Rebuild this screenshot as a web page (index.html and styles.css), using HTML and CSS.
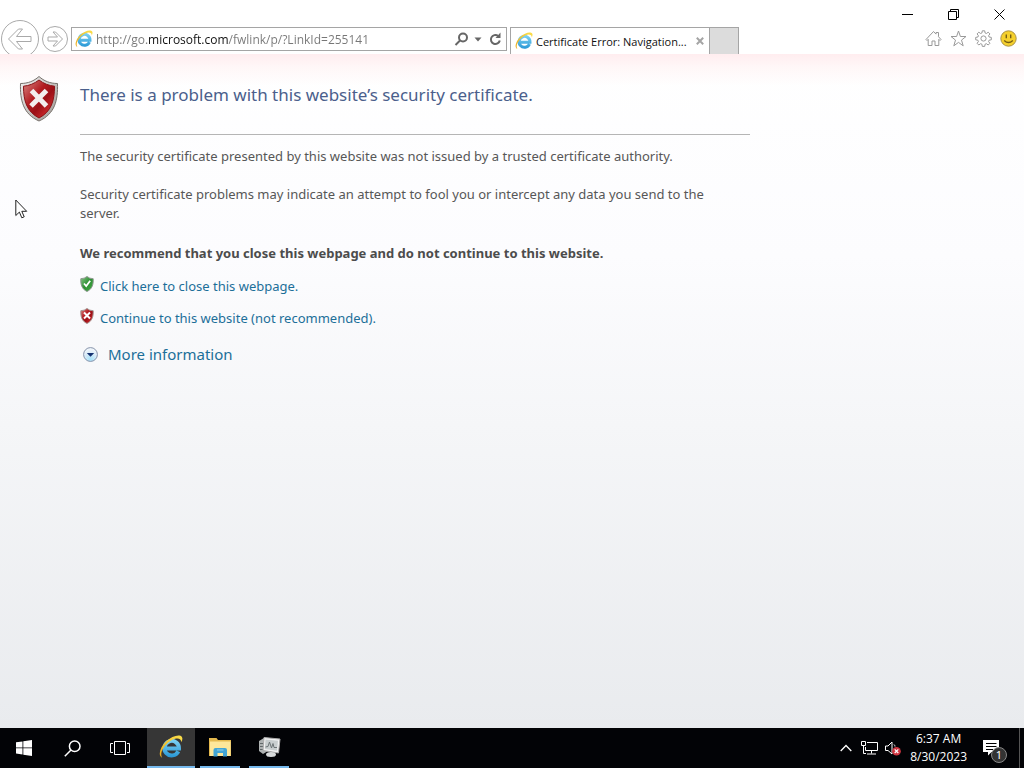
FILE: index.html
```html
<!DOCTYPE html>
<html lang="en">
<head>
<meta charset="utf-8">
<meta name="viewport" content="width=device-width, initial-scale=1">
<title>Certificate Error: Navigation Blocked</title>
<link rel="stylesheet" href="styles.css">
</head>
<body>
<svg class="defs" aria-hidden="true">
  <defs>
    <linearGradient id="ieBlue" gradientUnits="userSpaceOnUse" x1="0" y1="3" x2="0" y2="22"><stop offset="0" stop-color="#86d8f6"/><stop offset="1" stop-color="#2a98d6"/></linearGradient>
    <linearGradient id="ieGold" x1="0" y1="1" x2="1" y2="0"><stop offset="0" stop-color="#e9a91c"/><stop offset="1" stop-color="#fbe04c"/></linearGradient>
    <linearGradient id="rim" x1="0" y1="0" x2="1" y2="1"><stop offset="0" stop-color="#f4f4f4"/><stop offset="1" stop-color="#9b9590"/></linearGradient>
    <linearGradient id="red" x1="0" y1="0" x2="1" y2="1"><stop offset="0" stop-color="#d98a86"/><stop offset=".4" stop-color="#b31c21"/><stop offset=".6" stop-color="#9c0f16"/><stop offset="1" stop-color="#ee3b3b"/></linearGradient>
    <linearGradient id="green" x1="0" y1="0" x2="1" y2="1"><stop offset="0" stop-color="#8bc58a"/><stop offset=".5" stop-color="#2d8f33"/><stop offset="1" stop-color="#45ad45"/></linearGradient>
    <radialGradient id="ball" cx=".5" cy=".85" r=".8"><stop offset="0" stop-color="#a5e2fa"/><stop offset=".6" stop-color="#dcecf8"/><stop offset="1" stop-color="#f4f8fc"/></radialGradient>
    <symbol id="ie" viewBox="0 0 24 24">
      <path d="M19.300 16.300A7.300 7.300 0 1 1 20 13.500H7.500" fill="none" stroke="url(#ieBlue)" stroke-width="4"/>
      <path d="M3.200 22.800C-1.500 20.500 1 12.500 7 6.500 13 .9 20.800-1 22.900 2 23.900 3.600 23.200 5.600 22.400 7.200 22.200 3.300 18.500 2.300 13.400 4.800 7.500 7.800 2.800 14 2.300 18.500 2.200 20.500 2.500 21.700 3.200 22.800Z" fill="url(#ieGold)"/>
    </symbol>
  </defs>
</svg>

<div class="desktop">
  <header class="chrome">
    <nav class="history" aria-label="History">
      <button class="round back" aria-label="Back">
        <svg width="38" height="38" viewBox="0 0 38 38"><circle cx="19" cy="19" r="18.500"/><path d="M7.500 19 17.500 9h4L15.500 16.500H30v5H15.500L21.500 29h-4Z"/></svg>
      </button>
      <button class="round forward" aria-label="Forward">
        <svg width="26" height="26" viewBox="0 0 26 26"><circle cx="13" cy="13" r="12.500"/><path d="M20.500 13 13.500 6H11l4.500 5H6v4h9.500L11 20h2.500Z"/></svg>
      </button>
    </nav>
    <form class="address">
      <svg width="18" height="18"><use href="#ie"/></svg>
      <input class="url" type="text" aria-label="Address" value="http://go.microsoft.com/fwlink/p/?LinkId=255141">
      <button class="field-button" type="button" aria-label="Search"><svg width="15" height="15" viewBox="0 0 15 15" fill="none" stroke="#666" stroke-width="2"><circle cx="9" cy="5.500" r="4"/><path d="M6 8.500 1.500 13"/></svg></button>
      <button class="field-button" type="button" aria-label="Show address list"><svg width="8" height="5" viewBox="0 0 8 5"><path d="M.5.5h7L4 4.500Z" fill="#666"/></svg></button>
      <button class="field-button refresh" type="button" aria-label="Refresh"><svg width="13" height="14" viewBox="0 0 13 14"><path d="M10.800 8.500A4.500 4.500 0 1 1 9 3.800" fill="none" stroke="#666" stroke-width="2"/><path d="M11.500.5V6H6.500Z" fill="#666"/></svg></button>
    </form>
    <div class="tabs">
      <div class="tab">
        <svg width="18" height="18"><use href="#ie"/></svg>
        <span class="tab-title">Certificate Error: Navigation...</span>
        <button class="tab-close" aria-label="Close tab"><svg width="8" height="8" viewBox="0 0 8 8"><path d="m.8.8 6.400 6.400M7.200.8.8 7.200" stroke="#a5a5a5" stroke-width="2"/></svg></button>
      </div>
      <button class="new-tab" aria-label="New tab"></button>
    </div>
    <div class="corner">
      <div class="window-buttons">
        <button aria-label="Minimize"><svg width="11" height="11" viewBox="0 0 11 11"><path d="M0 5.500h11"/></svg></button>
        <button aria-label="Restore"><svg width="11" height="11" viewBox="0 0 11 11"><path d="M.5 2.500h8v8h-8ZM2.500 2.500v-2h8v8h-2"/></svg></button>
        <button aria-label="Close"><svg width="11" height="11" viewBox="0 0 11 11"><path d="m.5.5 10 10M10.500.5l-10 10"/></svg></button>
      </div>
      <div class="tools">
        <button aria-label="Home"><svg width="17" height="17" viewBox="0 0 17 17"><path d="M1 9.500 8.500 1.500l2.500 2.600V2.500h2.500v4.200L16 9.500l-1 1-1.200-1.200v6.200H10v-4.500H7v4.500H3.200V9.300L2 10.500Z"/></svg></button>
        <button aria-label="Favorites"><svg width="17" height="17" viewBox="0 0 17 17"><path d="m8.500 1 1.900 5.500H16l-4.500 3.600 1.700 5.700-4.700-3.400-4.700 3.400 1.700-5.700L1 6.500h5.600Z"/></svg></button>
        <button aria-label="Tools"><svg width="17" height="17" viewBox="0 0 17 17"><path d="m7.300.8h2.400l.4 2.200 1.300.5 1.800-1.300 1.700 1.700-1.300 1.800.5 1.300 2.200.4v2.400l-2.200.4-.5 1.300 1.300 1.800-1.700 1.700-1.800-1.300-1.300.5-.4 2.200H7.300l-.4-2.200-1.300-.5L3.800 15l-1.700-1.700 1.300-1.800-.5-1.300L.7 9.800V7.400L2.900 7l.5-1.300L2.100 3.900l1.700-1.700 1.800 1.300L6.900 3Z"/><circle cx="8.500" cy="8.500" r="2.600"/></svg></button>
        <button aria-label="Send a smile"><svg width="17" height="17" viewBox="0 0 17 17"><circle cx="8.500" cy="8.500" r="7.700" fill="#f5d02c" stroke="#aa9246"/><path d="M6.300 4.500v3.800M10.700 4.500v3.800M4.200 10.500q4.300 4.200 8.600 0" stroke="#765e13" stroke-width="1.400"/></svg></button>
      </div>
    </div>
  </header>

  <main class="page">
    <svg class="shield" width="40" height="48" viewBox="0 0 40 48"><path d="M20 1.500C15 6 9 8.500 1.500 8.500 1 25 4 39 20 46 36 39 39 25 38.500 8.500 31 8.500 25 6 20 1.500Z" fill="url(#rim)" stroke="#77716c"/><path d="M20 5C15.500 8.500 10 10.800 4.500 11.200 4.500 25.500 7.500 36.500 20 43 32.500 36.500 35.500 25.500 35.500 11.200 30 10.800 24.500 8.500 20 5Z" fill="url(#red)" stroke="#8a1115"/><path d="m12.500 15.500 15 15.500M27.500 15.500 12 31" stroke="#f3eded" stroke-width="5"/></svg>
    <div class="message">
      <h1>There is a problem with this website’s security certificate.</h1>
      <p>The security certificate presented by this website was not issued by a trusted certificate authority.</p>
      <p>Security certificate problems may indicate an attempt to fool you or intercept any data you send to the server.</p>
      <p class="advice">We recommend that you close this webpage and do not continue to this website.</p>
      <ul class="choices">
        <li><svg width="14" height="16" viewBox="0 0 14 16"><path d="M7 .5Q4.500 2.700.8 2.700C.5 9 2 13 7 15.500 12 13 13.500 9 13.200 2.700Q9.500 2.700 7 .5Z" fill="url(#green)" stroke="#8f9890"/><path d="m4 7.500 2.200 2.500L10.200 4.700" fill="none" stroke="#fff" stroke-width="1.800"/></svg><a href="#close">Click here to close this webpage.</a></li>
        <li><svg width="14" height="16" viewBox="0 0 14 16"><path d="M7 .5Q4.500 2.700.8 2.700C.5 9 2 13 7 15.500 12 13 13.500 9 13.200 2.700Q9.500 2.700 7 .5Z" fill="url(#red)" stroke="#a39693"/><path d="m4 4.500 6 6M10 4.500l-6 6" stroke="#fff" stroke-width="2"/></svg><a href="#continue">Continue to this website (not recommended).</a></li>
      </ul>
      <a class="more" href="#more"><svg width="15" height="15" viewBox="0 0 15 15"><circle cx="7.500" cy="7.500" r="6.900" fill="url(#ball)" stroke="#8592aa"/><path d="M3.800 6h7.400L7.500 9.800Z" fill="#123070"/></svg>More information</a>
    </div>
    <svg class="cursor" width="13" height="20" viewBox="0 0 13 20"><path d="M.8 1v15.500l3.600-3.400 2.400 5.700 2.400-1-2.400-5.500h4.900Z" fill="#fff" stroke="#222"/></svg>
  </main>

  <footer class="taskbar">
    <div class="launch">
      <button aria-label="Start"><svg width="16" height="16" viewBox="0 0 16 16" fill="#fff"><path d="m0 2.300 6.500-.9v6.100H0ZM7.300 1.300 16 0v7.500H7.300ZM0 8.300h6.500v6.200L0 13.600ZM7.300 8.300H16V16l-8.700-1.300Z"/></svg></button>
      <button aria-label="Search"><svg width="17" height="17" viewBox="0 0 17 17" fill="none" stroke="#fff" stroke-width="1.500"><circle cx="10.700" cy="6.300" r="5.300"/><path d="M7 10 .8 16.200"/></svg></button>
      <button aria-label="Task View"><svg width="20" height="14" viewBox="0 0 20 14" fill="none" stroke="#fff"><path d="M4.500.5h11v13h-11ZM3 2.500H.5v9H3M17 2.500h2.500v9H17"/></svg></button>
    </div>
    <div class="apps">
      <button class="active" aria-label="Internet Explorer"><svg width="24" height="24"><use href="#ie"/></svg></button>
      <button aria-label="File Explorer"><svg width="22" height="20" viewBox="0 0 22 20"><path d="M0 1h7.500L9 3h13v16H0Z" fill="#e4b94e"/><path d="M1 4.500h20.500V19H1Z" fill="#fde79a"/><path d="M4.500 19.500V13q0-2 2-2h9.500q2 0 2 2v6.500h-4V16h-5.500v3.500Z" fill="#42a5d5"/><path d="M8 13h6.500" stroke="#8fd0ee"/></svg></button>
      <button aria-label="Server Manager"><svg width="23" height="22" viewBox="0 0 23 22"><path d="m1 5 5-3 4 1v12l-5 3-4-3Z" fill="#aeb2b2"/><path d="M2 7.500h4M2 10.500h4M2 13.500h4" stroke="#62696a"/><path d="m6 1.500 16 1.500-1.500 14L5 14.500Z" fill="#f1f2f2" stroke="#aaa"/><path d="m7.500 3.500 12.500 1.200-1 10L6.800 13Z" fill="#c8cecf"/><path d="m7.500 11 2.500-.5L11.500 6l2 6L15 7.500l1 4h3" fill="none" stroke="#6c7476"/><ellipse cx="13" cy="18.500" rx="5" ry="2.500" fill="#d7dada"/></svg></button>
    </div>
    <div class="tray">
      <button aria-label="Show hidden icons"><svg width="12" height="8" viewBox="0 0 12 8"><path d="m.7 7 5.300-5.500L11.300 7" fill="none" stroke="#fff" stroke-width="1.300"/></svg></button>
      <button aria-label="Network"><svg width="17" height="14" viewBox="0 0 17 14" fill="none" stroke="#fff"><path d="M6 1.500h10.500v8H4.500V6M10.500 9.500v3M6 13h9M.5.500h4v4h-4ZM2.500 4.500v8H5"/></svg></button>
      <button aria-label="Volume"><svg width="16" height="15" viewBox="0 0 16 15"><path d="M.5 5H3l4-4v12L3 9.500H.5ZM9 3.500q1 1 1 2" fill="none" stroke="#fff"/><circle cx="11.500" cy="10.200" r="4.300" fill="#d03540"/><path d="m9.700 8.400 3.600 3.600M13.300 8.400 9.700 12" stroke="#fff" stroke-width="1.200"/></svg></button>
      <button class="clock"><time datetime="2023-08-30T06:37">6:37 AM<br>8/30/2023</time></button>
      <button class="notices" aria-label="Notifications, 1 new"><svg width="17" height="16" viewBox="0 0 17 16"><path d="M0 0h16v12H8.500L5 15.500V12H0Z" fill="#fff"/><path d="M3 3.500h10.500M3 6.500h10.500M3 9.500h7" stroke="#000"/></svg><span class="badge">1</span></button>
      <button class="show-desktop" aria-label="Show desktop"></button>
    </div>
  </footer>
</div>
</body>
</html>
```
FILE: styles.css
```css
* { box-sizing: border-box; }
body { margin: 0; font-family: "Noto Sans", "Open Sans", sans-serif; font-size: 13px; color: #575757; }
button { border: 0; padding: 0; background: none; font: inherit; color: inherit; display: flex; align-items: center; justify-content: center; }
svg { display: block; flex: none; }
a { color: #1c6f99; text-decoration: none; }
.defs { position: absolute; width: 0; height: 0; }

.desktop { display: flex; flex-direction: column; min-height: 100vh; }

.chrome { display: flex; align-items: flex-start; height: 54px; background: #fff; overflow: hidden; }
.history { display: flex; align-items: center; gap: 3px; padding: 20px 3px 0 1px; }
.round svg { fill: #fff; stroke: #a9a9a9; }
.address { display: flex; align-items: center; flex: 0 1 436px; min-width: 0; height: 24px; margin: 27px 3px 0 0; padding: 0 4px 0 3px; border: 1px solid #a5a5a5; background: #fff; }
.url { flex: 1; min-width: 0; margin-left: 3px; padding: 0; border: 0; outline: 0; font-family: "Open Sans", sans-serif; font-size: 12px; color: transparent; background: linear-gradient(90deg, #777 52px, #111 52px, #111 132px, #777 132px); -webkit-background-clip: text; background-clip: text; }
.field-button { margin-left: 5px; height: 20px; }
.refresh { margin-left: 7px; }
.tabs { display: flex; flex: 0 1 229px; min-width: 0; height: 27px; margin-top: 27px; border: 1px solid #a5a5a5; border-bottom: 0; }
.tab { display: flex; align-items: center; flex: 1; min-width: 0; padding: 0 5px 0 4px; color: #111; font-family: "Open Sans", sans-serif; font-size: 11px; }
.tab-title { flex: 1; min-width: 0; margin-left: 3px; white-space: nowrap; overflow: hidden; }
.new-tab { width: 29px; border-left: 1px solid #a5a5a5; background: #dcdcdc; }
.corner { margin-left: auto; }
.window-buttons { display: flex; justify-content: flex-end; padding-right: 2px; }
.window-buttons button { width: 46px; height: 28px; }
.window-buttons svg { fill: none; stroke: #000; }
.tools { display: flex; justify-content: flex-end; gap: 8px; padding: 2px 7px 0 0; }
.tools svg { fill: none; stroke: #999; }

.page { position: relative; flex: 1; display: flex; align-items: flex-start; gap: 21px; padding: 21px 20px 20px 19px; background: linear-gradient(#ffedef, rgba(255, 244, 245, .8) 12px, rgba(255, 255, 255, 0) 32px), linear-gradient(#fff, #fcfcfe 30%, #f5f6f8 55%, #e9ebee); }
.message { flex: 0 1 670px; min-width: 0; line-height: 19px; }
h1 { margin: 0 0 12px; padding: 6px 0 25px; border-bottom: 1px solid #b5b5b5; font-size: 17px; line-height: 28px; font-weight: 400; color: #4b5f8c; }
p { margin: 0 0 19px; padding-right: 16px; }
.message .advice { margin: 21px 0 13px; font-weight: 700; color: #4c4c4c; }
.choices { display: grid; gap: 12px; margin: 0 0 16px; padding: 0; list-style: none; }
.choices li { display: flex; align-items: flex-start; gap: 6px; height: 20px; }
.choices a { padding-top: 1px; }
.more { display: flex; align-items: center; gap: 10px; padding-left: 3px; font-size: 15px; line-height: 20px; }
/* Mouse pointer floats over the document */
.cursor { position: absolute; left: 15px; top: 145px; }

.taskbar { display: flex; justify-content: space-between; height: 40px; background: #020306; color: #fff; }
.launch, .apps, .tray { display: flex; }
.launch button { width: 48px; }
.apps { flex: 1; gap: 9px; margin-left: 3px; }
.apps button { width: 40px; border-bottom: 2px solid #76b9ed; }
.apps .active { width: 48px; margin-right: -4px; background: #363636; }
.tray { align-items: stretch; }
.tray button { margin-right: 9px; }
.tray button:nth-child(2) { margin-right: 7px; }
.tray .clock { margin: 0 16px 0 0; font-family: "Open Sans", sans-serif; font-size: 12px; line-height: 18px; text-align: center; }
.tray .notices { position: relative; width: 24px; margin-right: 12px; justify-content: flex-start; }
.badge { position: absolute; left: 8px; top: 19px; width: 16px; height: 16px; border: 1px solid #888; border-radius: 50%; background: #333; font-size: 11px; line-height: 14px; text-align: center; }
.tray .show-desktop { width: 5px; margin: 0; border-left: 1px solid #555; }
```
